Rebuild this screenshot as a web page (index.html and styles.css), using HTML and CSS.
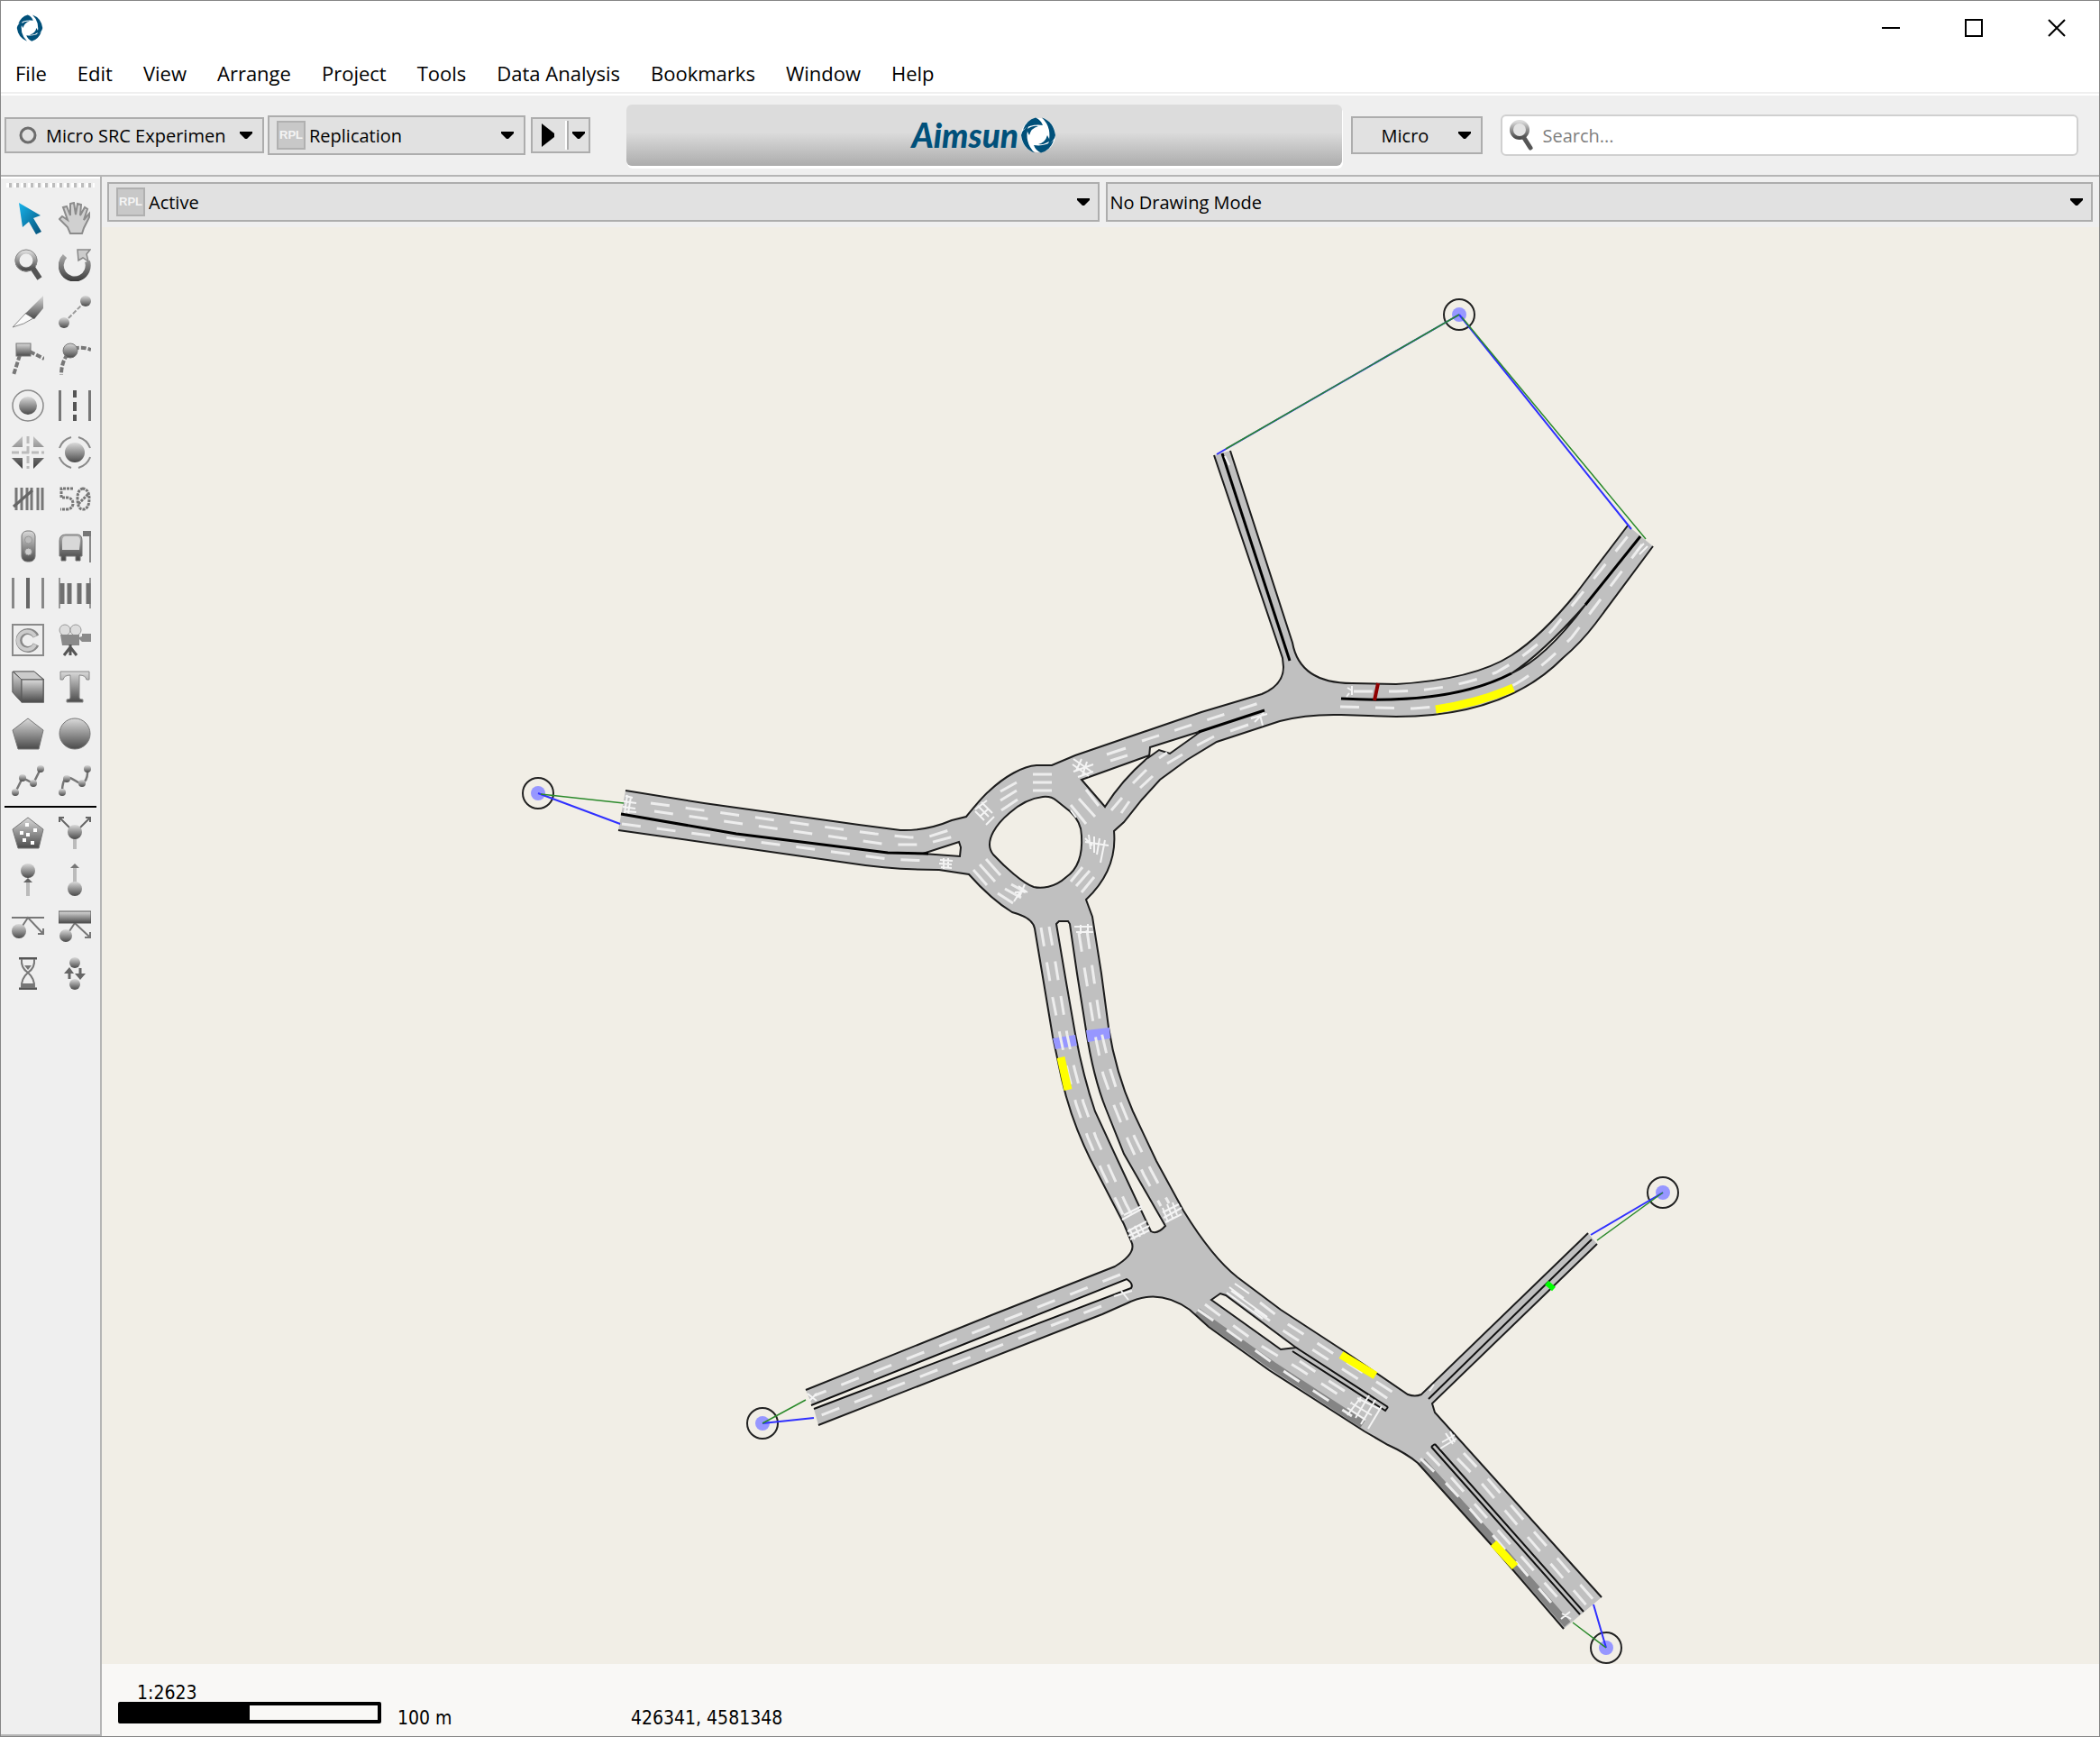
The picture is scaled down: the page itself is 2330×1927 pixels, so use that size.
FILE: index.html
```html
<!DOCTYPE html>
<html lang="en">
<head>
<meta charset="utf-8">
<title>Aimsun</title>
<link rel="stylesheet" href="styles.css">
</head>
<body>
<svg class="defs" aria-hidden="true">
  <defs>
    <linearGradient id="g" x1="0" y1="0" x2="0" y2="1"><stop offset="0" stop-color="#dadada"/><stop offset="1" stop-color="#4a4a4a"/></linearGradient>
    <linearGradient id="gu" gradientUnits="userSpaceOnUse" x1="0" y1="0" x2="0" y2="36"><stop offset="0" stop-color="#c4c4c4"/><stop offset="1" stop-color="#3c3c3c"/></linearGradient>
    <linearGradient id="blue" x1="0" y1="0" x2="1" y2="1"><stop offset="0" stop-color="#18b4ec"/><stop offset="1" stop-color="#045078"/></linearGradient>
    <symbol id="arrow" viewBox="0 0 14 8"><path d="M0 0H14V2L8 8H6L0 2Z"/></symbol>
    <symbol id="swirl" viewBox="-20 -20 40 40">
      <g id="blades" fill="#00507a">
        <path id="blade" d="M-17 -6Q-13 -17 -3 -19.500Q3 -17 5 -11Q-7 -13 -17 -6ZM4 -19.500Q17 -15 19 0Q18 6 11 10Q16 -8 4 -19.500ZM-13 -6Q-7 -11 0 -10Q-8 -8 -10 0Z"/>
        <use href="#blade" transform="rotate(180)"/>
      </g>
    </symbol>
  </defs>
</svg>
<div class="window">
  <header class="titlebar">
    <svg class="app-icon" aria-hidden="true"><use href="#swirl"/></svg>
    <div class="window-buttons">
      <button aria-label="Minimize"><svg viewBox="0 0 20 20"><path d="M0 10H20"/></svg></button>
      <button aria-label="Maximize"><svg viewBox="0 0 20 20"><path d="M1 1H19V19H1Z"/></svg></button>
      <button aria-label="Close"><svg viewBox="0 0 20 20"><path d="M1 1L19 19M19 1L1 19"/></svg></button>
    </div>
  </header>
  <nav class="menubar">
    <button>File</button><button>Edit</button><button>View</button><button>Arrange</button><button>Project</button><button>Tools</button><button>Data Analysis</button><button>Bookmarks</button><button>Window</button><button>Help</button>
  </nav>
  <div class="toolbar">
    <div class="combo experiment">
      <svg class="ring" viewBox="0 0 20 20" aria-hidden="true"><circle cx="10" cy="10" r="8"/></svg>
      <select aria-label="Experiment"><option>Micro SRC Experimen</option></select>
      <svg class="arrow" aria-hidden="true"><use href="#arrow"/></svg>
    </div>
    <div class="combo replication">
      <span class="rpl">RPL</span>
      <select aria-label="Replication"><option>Replication</option></select>
      <svg class="arrow" aria-hidden="true"><use href="#arrow"/></svg>
    </div>
    <div class="run">
      <button aria-label="Run"><svg class="play" viewBox="0 0 14 26"><path d="M0 0L14 11V15L0 26Z"/></svg></button>
      <button class="run-more" aria-label="Run options"><svg class="arrow"><use href="#arrow"/></svg></button>
    </div>
    <div class="brand"><span>Aimsun</span><svg viewBox="-20 -20 40 40" aria-hidden="true"><circle r="19" fill="#fff"/><use href="#blades"/></svg></div>
    <div class="combo mode">
      <select aria-label="Simulation level"><option>Micro</option></select>
      <svg class="arrow" aria-hidden="true"><use href="#arrow"/></svg>
    </div>
    <label class="search">
      <svg viewBox="0 0 28 34" aria-hidden="true"><circle cx="12" cy="11" r="9" fill="#e4e4e4" stroke="url(#g)" stroke-width="4"/><path d="M17 20L24 31" stroke="#555" stroke-width="5" stroke-linecap="round"/></svg>
      <input type="text" placeholder="Search..." aria-label="Search">
    </label>
  </div>
  <main class="workspace">
    <aside class="sidebar">
      <div class="grip"></div>
      <div class="tools">
        <button aria-label="Select"><svg viewBox="0 0 36 36"><path d="M8 1L32 15L24 18L33 33L27 36L19 22L12 28Z" fill="url(#blue)"/></svg></button>
        <button aria-label="Pan"><svg viewBox="0 0 36 36"><path d="M13 35L10 28L1 19L4 16L10 20L5 6L9 5L13 15L13 2L17 1L19 14L21 2L25 3L24 15L29 6L32 8L28 20L34 13L34 17L28 29L26 35Z" fill="#d0d0d0" stroke="#8c8c8c" stroke-width="2"/></svg></button>
        <button aria-label="Zoom"><svg viewBox="0 0 36 36"><circle cx="16" cy="13" r="10" fill="none" stroke="url(#g)" stroke-width="5"/><circle cx="16" cy="13" r="12" fill="none" stroke="#888"/><path d="M23 21L31 33" stroke="#555" stroke-width="6"/></svg></button>
        <button aria-label="Rotate"><svg viewBox="0 0 36 36"><path d="M7 8A15 15 0 1 0 32 14" fill="none" stroke="url(#gu)" stroke-width="6"/><path d="M21 1H35L31 6L33 14L27 10L22 13Z" fill="#ccc" stroke="#888" stroke-width="1.5"/></svg></button>
        <button aria-label="Cut"><svg viewBox="0 0 36 36"><path d="M1 35L16 19L24 25Q14 32 1 35Z" fill="#fafafa" stroke="#888"/><path d="M35 0V14L25 26L15 20Z" fill="url(#g)"/></svg></button>
        <button aria-label="Connection"><svg viewBox="0 0 36 36"><path d="M6 30L30 6" stroke="#999" stroke-width="2" stroke-dasharray="5 2"/><circle cx="30" cy="6" r="6" fill="url(#g)"/><circle cx="6" cy="30" r="6" fill="url(#g)"/></svg></button>
        <button aria-label="Vertex"><svg viewBox="0 0 36 36"><path d="M9 14L2 36M20 10L36 18" stroke="#777" stroke-width="4" stroke-dasharray="6 2"/><rect x="5" y="1" width="16" height="14" fill="url(#g)" stroke="#777"/></svg></button>
        <button aria-label="Curve vertex"><svg viewBox="0 0 36 36"><path d="M10 13Q3 22 3 36M17 7Q25 4 36 8" fill="none" stroke="#777" stroke-width="4" stroke-dasharray="6 2"/><circle cx="13" cy="9" r="8" fill="url(#g)" stroke="#777"/></svg></button>
        <button aria-label="Centroid"><svg viewBox="0 0 36 36"><circle cx="18" cy="18" r="17" fill="none" stroke="#8a8a8a" stroke-width="1.5"/><circle cx="18" cy="18" r="10" fill="url(#g)"/></svg></button>
        <button aria-label="Section"><svg viewBox="0 0 36 36"><path d="M1.500 1V35M34.500 1V35" stroke="#777" stroke-width="3"/><path d="M18 1V9M18 14V24M18 28V35" stroke="#555" stroke-width="4"/></svg></button>
        <button aria-label="Node"><svg viewBox="0 0 36 36"><path d="M12 0V12H0ZM24 0V12H36ZM12 36V24H0ZM24 36V24H36Z" fill="url(#gu)"/><path d="M18 0V36M0 18H36" stroke="#bbb" stroke-width="3" stroke-dasharray="8 3"/></svg></button>
        <button aria-label="Roundabout"><svg viewBox="0 0 36 36"><circle cx="18" cy="18" r="11" fill="url(#g)"/><path d="M1 13Q4 4 14 1M22 1Q32 4 35 13M35 23Q32 32 22 35M14 35Q4 32 1 23" fill="none" stroke="#8a8a8a" stroke-width="2"/></svg></button>
        <button aria-label="Detector count"><svg viewBox="0 0 36 36"><path d="M5 5V30M11 5V30M17 5V30M22 5V30M29 5V30M34 5V30" stroke="#777" stroke-width="3"/><path d="M2 26L23 8" stroke="#666" stroke-width="3"/></svg></button>
        <button aria-label="Speed sign"><svg viewBox="0 0 36 36"><path d="M16 6H3V16H10Q16 17 16 23Q15 29 9 29H2M27 6Q21 7 21 17Q21 29 27 29Q34 29 34 17Q34 7 27 6ZM22 23L33 12" fill="none" stroke="#777" stroke-width="3" stroke-dasharray="3 1"/></svg></button>
        <button aria-label="Traffic light"><svg viewBox="0 0 36 36"><rect x="11" y="1" width="15" height="34" rx="6" fill="url(#g)" stroke="#777"/><circle cx="18.500" cy="11" r="4" fill="#bbb" stroke="#999"/><circle cx="18.500" cy="24" r="4" fill="#ccc" stroke="#888"/></svg></button>
        <button aria-label="Bus stop"><svg viewBox="0 0 36 36"><path d="M1 12Q1 5 8 5H21Q26 5 26 12V29H24V34H19V29H8V34H3V29H1Z" fill="url(#gu)" stroke="#777"/><path d="M4 12Q4 7 8 7H20Q24 7 24 12L23 22H4Z" fill="#d8d8d8"/><path d="M27 3H35V36" fill="none" stroke="#888" stroke-width="2"/><rect x="27" y="1" width="9" height="6" fill="#777"/></svg></button>
        <button aria-label="Lanes"><svg viewBox="0 0 36 36"><path d="M1.500 1V35M34.500 1V35" stroke="#888" stroke-width="3"/><path d="M18 1V35" stroke="#666" stroke-width="4"/></svg></button>
        <button aria-label="Pedestrian crossing"><svg viewBox="0 0 36 36"><path d="M1 1V35M35 1V35" stroke="#999" stroke-width="2"/><path d="M4 7V30M12 7V30M23 7V30M33 7V30" stroke="#707070" stroke-width="5"/></svg></button>
        <button aria-label="Controller"><svg viewBox="0 0 36 36"><rect x="1" y="1" width="34" height="34" fill="#eee" stroke="#8a8a8a" stroke-width="2"/><path d="M27 14A10 10 0 1 0 27 23" fill="none" stroke="#888" stroke-width="7"/><path d="M26 14A10 10 0 1 0 26 23" fill="none" stroke="#ccc" stroke-width="4"/></svg></button>
        <button aria-label="Camera"><svg viewBox="0 0 36 36"><circle cx="7" cy="7" r="6" fill="#ddd" stroke="#999"/><circle cx="19" cy="7" r="6" fill="#ddd" stroke="#999"/><path d="M2 12H23V15L26 14V11H36V20H26L23 17V24H4Z" fill="#8a8a8a"/><path d="M13 23V35M13 26L6 35M13 26L20 35" stroke="#555" stroke-width="3"/></svg></button>
        <button aria-label="Box"><svg viewBox="0 0 36 36"><path d="M1 1H25L36 10V35H11L1 24Z" fill="#999" stroke="#666"/><path d="M1 1L11 10V35L1 24Z" fill="url(#g)" stroke="#666"/><path d="M2 1H25L35 10H11Z" fill="#ccc" stroke="#666"/><rect x="11" y="10" width="24" height="25" fill="url(#g)" stroke="#555"/></svg></button>
        <button aria-label="Text tool"><svg viewBox="0 0 36 36"><path d="M2 1H34V10H31Q30 5 23 5V30Q23 32 27 32V35H9V32Q13 32 13 30V5Q6 5 5 10H2Z" fill="url(#g)" stroke="#888"/></svg></button>
        <button aria-label="Polygon"><svg viewBox="0 0 36 36"><path d="M18 1L35 14L30 35H7L1 14Z" fill="url(#g)" stroke="#777"/></svg></button>
        <button aria-label="Circle"><svg viewBox="0 0 36 36"><circle cx="18" cy="18" r="17" fill="url(#g)" stroke="#777"/></svg></button>
        <button aria-label="Polyline"><svg viewBox="0 0 36 36"><path d="M4 31L12 15L24 21L32 5" fill="none" stroke="#777" stroke-width="2.500"/><g fill="url(#g)"><circle cx="4" cy="31" r="4"/><circle cx="12" cy="15" r="4"/><circle cx="24" cy="21" r="4"/><circle cx="32" cy="5" r="4"/></g></svg></button>
        <button aria-label="Bezier"><svg viewBox="0 0 36 36"><path d="M4 31C4 8 14 15 20 19S33 20 32 5" fill="none" stroke="#777" stroke-width="2.500"/><g fill="url(#g)"><circle cx="4" cy="31" r="4"/><circle cx="9" cy="16" r="4"/><circle cx="26" cy="21" r="4"/><circle cx="32" cy="5" r="4"/></g></svg></button>
      </div>
      <hr>
      <div class="tools">
        <button aria-label="Pedestrian area"><svg viewBox="0 0 36 36"><path d="M18 1L35 14L30 35H7L1 14Z" fill="url(#g)" stroke="#777"/><path d="M15 7h4v4h-4zM9 16h4v4h-4zM16 18h4v4h-4zM24 13h4v4h-4zM12 24h4v4h-4zM21 27h4v4h-4z" fill="#fff"/></svg></button>
        <button aria-label="Decision"><svg viewBox="0 0 36 36"><path d="M18 20V36" stroke="#bbb" stroke-width="4"/><path d="M15 15L1 1M21 15L35 1M1 6V1H6M30 1H35V6" fill="none" stroke="#666" stroke-width="2"/><circle cx="18" cy="17" r="8" fill="url(#g)"/></svg></button>
        <button aria-label="Exit"><svg viewBox="0 0 36 36"><path d="M18 18V36" stroke="#bbb" stroke-width="4"/><path d="M13 21L18 16L23 21Z" fill="#666"/><circle cx="18" cy="8" r="8" fill="url(#g)"/></svg></button>
        <button aria-label="Entrance"><svg viewBox="0 0 36 36"><path d="M18 3V24" stroke="#bbb" stroke-width="4"/><path d="M13 5L18 0L23 5Z" fill="#777"/><circle cx="18" cy="28" r="8" fill="url(#g)"/></svg></button>
        <button aria-label="Waypoint"><svg viewBox="0 0 36 36"><path d="M0 8H36M10 20L18 8L35 26M35 20V26H29" fill="none" stroke="#777" stroke-width="2"/><circle cx="8" cy="23" r="8" fill="url(#g)"/></svg></button>
        <button aria-label="Service point"><svg viewBox="0 0 36 36"><path d="M10 26L18 14L35 30M35 24V30H29" fill="none" stroke="#777" stroke-width="2"/><rect y="1" width="36" height="13" fill="url(#g)" stroke="#555"/><circle cx="8" cy="28" r="7" fill="url(#g)"/></svg></button>
        <button aria-label="Delay"><svg viewBox="0 0 36 36"><path d="M8 1H28M8 35H28" stroke="#555" stroke-width="3"/><path d="M11 2Q10 12 18 17Q26 12 25 2M11 34Q10 24 18 17Q26 24 25 34" fill="none" stroke="#777" stroke-width="2"/><path d="M12 34V29H24V34ZM14 9H22L18 14Z" fill="#777"/></svg></button>
        <button aria-label="Transfer"><svg viewBox="0 0 36 36"><circle cx="18" cy="6" r="6" fill="url(#g)"/><circle cx="18" cy="30" r="6" fill="url(#g)"/><path d="M12 24V14M24 12V22" stroke="#666" stroke-width="3"/><path d="M6 18L12 11L17 18ZM18 18H30L24 25Z" fill="#666"/></svg></button>
      </div>
    </aside>
    <section class="view">
      <div class="view-bar">
        <div class="combo">
          <span class="rpl">RPL</span>
          <select aria-label="Active replication"><option>Active</option></select>
          <svg class="arrow" aria-hidden="true"><use href="#arrow"/></svg>
        </div>
        <div class="combo plain">
          <select aria-label="Drawing mode"><option>No Drawing Mode</option></select>
          <svg class="arrow" aria-hidden="true"><use href="#arrow"/></svg>
        </div>
      </div>
      <div class="map">
        <svg viewBox="113 252 2216 1594" role="img" aria-label="Road network">
          <!-- Asphalt -->
          <path fill="#c0c0c0" d="M694 877L781 891L953 915L999 921Q1028 922 1056 910L1072 906C1085 890 1090 884 1097 878C1115 861 1135 850 1150 849H1167L1193 838L1333 790L1400 770Q1424 760 1424 740L1423 730L1347 505L1365 500L1434 713Q1442 758 1500 758L1549 759Q1635 754 1677 727Q1710 706 1749 658L1806 583L1834 606L1770 692Q1754 713 1734 730Q1670 795 1549 795L1488 793Q1450 792 1420 800L1350 823L1317 843L1287 865L1267 887L1247 912L1236 922Q1240 965 1205 998L1212 1017L1222 1080L1230 1140Q1238 1190 1257 1233L1283 1288L1313 1343Q1345 1395 1373 1417L1421 1453L1493 1500L1562 1547Q1570 1550 1577 1547L1762 1368L1772 1380L1589 1557L1592 1567L1777 1772L1735 1807L1653 1712L1573 1623L1540 1603L1514 1588L1408 1520L1341 1472L1320 1453Q1285 1428 1250 1446L1223 1458L908 1581L903 1563L894 1542L1100 1459L1237 1405Q1262 1390 1255 1377L1247 1358L1217 1300Q1190 1250 1178 1197L1168 1150L1158 1090L1148 1030Q1146 1018 1123 1012Q1100 998 1075 970L1042 965Q990 965 946 958L686 921Z"/>
          <!-- Paved shoulders -->
          <g fill="none" stroke="#858585" stroke-width="9">
            <path d="M1328 1455L1345 1468L1412 1515L1512 1580"/><path d="M1577 1621L1657 1709L1739 1802"/>
          </g>
          <!-- Outer kerbs -->
          <g fill="none" stroke="#1c1c1c" stroke-width="2">
            <path d="M694 877L781 891L953 915L999 921Q1028 922 1056 910L1072 906C1085 890 1090 884 1097 878C1115 861 1135 850 1150 849H1167L1193 838L1333 790L1400 770Q1424 760 1424 740L1423 730L1347 505"/>
            <path d="M1365 500L1434 713Q1442 758 1500 758L1549 759Q1635 754 1677 727Q1710 706 1749 658L1806 583"/>
            <path d="M1834 606L1770 692Q1754 713 1734 730Q1670 795 1549 795L1488 793Q1450 792 1420 800L1350 823L1317 843L1287 865L1267 887L1247 912L1236 922Q1240 965 1205 998L1212 1017L1222 1080L1230 1140Q1238 1190 1257 1233L1283 1288L1313 1343Q1345 1395 1373 1417L1421 1453L1493 1500L1562 1547Q1570 1550 1577 1547L1762 1368"/>
            <path d="M1772 1380L1589 1557L1592 1567L1777 1772"/>
            <path d="M1735 1807L1653 1712L1573 1623Q1560 1612 1540 1603L1514 1588L1408 1520L1341 1472L1320 1453Q1285 1428 1250 1446L1223 1458L908 1581"/>
            <path d="M894 1542L1100 1459L1237 1405Q1262 1390 1255 1377L1247 1358L1217 1300Q1190 1250 1178 1197L1168 1150L1158 1090L1148 1030Q1146 1018 1123 1012Q1100 998 1075 970L1042 965Q990 965 946 958L686 921"/>
          </g>
          <!-- Islands and medians -->
          <g fill="#f1eee6" stroke="#1c1c1c" stroke-width="2">
            <path d="M1157 884Q1166 883 1172 888L1187 900Q1200 912 1200 927Q1202 960 1183 973C1170 985 1155 986 1147 984C1135 980 1115 962 1102 948Q1094 938 1102 923Q1108 912 1120 902Q1138 886 1157 884Z"/>
            <path d="M1200 865L1226 895Q1245 865 1273 841L1275 838Z"/>
            <path d="M1276 829L1333 811L1298 836L1286 832L1275 840Z"/>
            <path d="M1024 947L1064 934L1066 940L1065 950Z"/>
            <path d="M1172 1025L1175 1022H1185L1187 1025L1195 1080L1205 1143Q1213 1195 1227 1230L1247 1280L1293 1360Q1284 1370 1277 1366L1240 1287L1215 1233Q1202 1195 1193 1147L1183 1090Z"/>
            <path d="M1344 1442L1354 1435L1360 1437L1438 1495L1421 1497Z"/>
            <path d="M1677 747Q1710 726 1759 671Q1714 731 1677 747Z"/>
          </g>
          <path d="M898 1559L1250 1419Q1258 1424 1255 1429L901 1564Z" fill="#f1eee6"/>
          <g fill="none" stroke="#111" stroke-width="2">
            <path d="M900 1559L1250 1419Q1258 1424 1255 1429L903 1563"/>
            <path d="M1438 1495L1540 1561M1434 1499L1537 1565L1540 1561"/>
            <path d="M1592 1602L1757 1788M1588 1605L1753 1791M1588 1605L1592 1602"/>
            <path d="M1585 1552L1766 1375"/>
          </g>
          <g fill="none" stroke="#000" stroke-width="3">
            <path d="M1356 503L1431 733"/>
            <path d="M689 903L817 925L985 946L1030 947"/>
            <path d="M1488 775Q1610 782 1677 747"/>
            <path d="M1759 671L1820 595"/>
            <path d="M1330 812L1403 788"/>
          </g>
          <!-- Detectors and stops -->
          <path d="M1168 1152L1193 1148L1195 1160L1171 1164ZM1205 1143L1231 1140L1232 1152L1207 1156Z" fill="#9797ff"/>
          <!-- Lane markings -->
          <g fill="none" stroke="#ededed" stroke-width="3" stroke-dasharray="21 18">
            <path d="M722 891L971 925L1010 929H1028L1062 918"/>
            <path d="M726 900L985 937H1024L1062 927"/>
            <path d="M690 914L985 953L1030 955"/>
            <path d="M1155 1029L1168 1107L1177 1153L1185 1190L1194 1225L1207 1262L1223 1300L1240 1335L1250 1356"/>
            <path d="M1164 1028L1171 1068L1184 1148L1192 1185L1202 1223L1216 1262L1232 1298L1249 1335L1258 1352"/>
            <path d="M1197 1035L1203 1073L1216 1153L1224 1192L1237 1229L1252 1266L1269 1303L1288 1338"/>
            <path d="M1206 1032L1217 1109L1223 1149L1232 1187L1244 1225L1259 1262L1277 1298L1297 1335"/>
            <path d="M1243 1414L904 1548"/><path d="M1222 1449L906 1572"/>
            <path d="M1398 1445L1429 1469L1463 1491L1549 1547"/><path d="M1392 1453L1425 1477L1527 1543L1546 1556"/>
            <path d="M1337 1447L1369 1471L1401 1494L1442 1519L1500 1557"/><path d="M1329 1453L1362 1476L1394 1499L1427 1523L1500 1571"/>
            <path d="M1442 1510L1476 1533L1510 1555"/>
            <path d="M1624 1612L1652 1642L1770 1777"/><path d="M1617 1618L1645 1647L1762 1783"/>
            <path d="M1583 1611L1610 1639L1728 1772"/><path d="M1576 1618L1603 1644L1631 1674L1722 1779"/>
            <path d="M1502 767H1549Q1610 766 1660 746Q1700 724 1724 697L1774 635L1810 590"/>
            <path d="M1487 784L1568 786Q1640 782 1683 758Q1710 742 1744 707L1822 604"/>
            <path d="M1267 822L1400 779" stroke-dasharray="20 18"/>
          </g>
          <g fill="none" stroke="#ededed" stroke-width="3">
            <path d="M1228 837l21 -7M1232 844l19 -6M1233 899l12 -14M1244 902l9 -13M1257 869l15 -15M1265 874l14 -13M1286 841l9 -6M1295 847l17 -10M1328 827l19 -10M1365 811l20 -7"/>
            <path d="M1146 859h21M1146 868h21M1146 877h21M1110 878l18 -10M1110 888l18 -11M1111 899l18 -12"/>
            <path d="M1087 959l17 19M1094 953l16 18M1080 965l15 17M1107 991l17 11M1115 986l18 10M1122 981l16 9"/>
            <path d="M1188 978l13 -16M1194 983l15 -17M1200 990l14 -17M1188 893l17 21M1197 886l18 20M1205 876l14 18"/>
          </g>
          <!-- Turn arrows and stop lines -->
          <g fill="none" stroke="#f4f4f4" stroke-width="2">
            <path d="M694 883l8 2M692 889l14 2M691 895l14 2M694 900l12 1M696 882l-3 20M700 884l-3 18"/>
            <path d="M1043 954l14 1M1042 958l14 1M1044 962l12 1M1047 952v12M1052 952v12"/>
            <path d="M1191 842l20 14M1190 848l18 13M1200 842l-6 13M1206 845l-5 15M1191 856l22 -8M1196 862l17 -6"/>
            <path d="M1082 900l10 10M1085 894l12 12M1089 890l12 12M1082 898l13 -10M1088 905l9 -8M1094 915l9 -9"/>
            <path d="M1188 899l6 8M1204 930l8 8M1208 926l2 16M1214 928v18M1220 930l-3 18M1226 932l-5 25M1204 934l26 4"/>
            <path d="M1130 983l10 7M1126 990l12 -1M1125 1000l8 -12M1137 981l-6 14"/>
            <path d="M1192 1028h20M1194 1034h19M1199 1026v10M1207 1025v10"/>
            <path d="M1388 797l18 -5M1392 801l10 -10M1398 793l3 12M1495 763l5 3M1497 769l-3 4M1500 761v10"/>
            <path d="M1245 1353l22 -12M1251 1366l21 -11M1252 1371l23 -11M1254 1375l21 -10M1247 1348l20 -10M1253 1363l6 12M1259 1360l6 12M1264 1358l6 11"/>
            <path d="M1290 1345l18 -9M1291 1351l20 -11M1293 1356l18 -9M1295 1336l6 15M1301 1334l5 14M1290 1340l6 16"/>
            <path d="M1236 1438l20 -6M1244 1432l8 10M1364 1428l16 12M1370 1424l16 11M1361 1434l40 29M1366 1432l40 29"/>
            <path d="M1495 1562l20 13M1500 1557l22 13M1506 1551l24 12M1510 1580l16 -27M1518 1585l15 -25M1504 1573l15 -25M1495 1570l15 -20"/>
            <path d="M1600 1600l14 -8M1598 1607l18 -11M1604 1590l8 12M1609 1588l5 12"/>
            <path d="M896 1546l10 8M898 1554l8 -8M1824 603l-8 8M1828 606l-9 9M1359 506l5 10M1586 1543l5 -7M1732 1796l10 -8M1733 1790l10 6"/>
          </g>
          <!-- Public transport stops, meters and signals -->
          <g fill="none" stroke="#ff0" stroke-width="9">
            <path d="M1593 787Q1640 780 1679 763"/><path d="M1177 1173L1185 1209"/><path d="M1488 1503L1526 1526"/><path d="M1657 1712L1681 1738"/>
          </g>
          <path d="M1529 758L1525 777" stroke="#8f0000" stroke-width="4"/>
          <path d="M1716 1423L1724 1430" stroke="#0f0" stroke-width="6"/>
          <!-- Centroids and their connections -->
          <g fill="none" stroke="#222" stroke-width="2">
            <circle cx="1619" cy="349" r="17"/><circle cx="597" cy="880" r="17"/><circle cx="1845" cy="1323" r="17"/><circle cx="846" cy="1579" r="17"/><circle cx="1782" cy="1828" r="17"/>
          </g>
          <g fill="#9797ff">
            <circle cx="1619" cy="349" r="8"/><circle cx="597" cy="880" r="8"/><circle cx="1845" cy="1323" r="8"/><circle cx="846" cy="1579" r="8"/><circle cx="1782" cy="1828" r="8"/>
          </g>
          <path d="M1619 349L1350 504M1619 349L1810 587M597 880L688 914M1845 1323L1765 1370M846 1579L903 1573M1782 1828L1768 1780" stroke="#3030ff" stroke-width="2"/>
          <path d="M1619 349L1360 498M1622 352L1826 598M600 881L692 891M1845 1323L1772 1376M846 1579L894 1553M1782 1828L1745 1800" stroke="#2b8a2b" stroke-width="1.500"/>
        </svg>
      </div>
      <footer class="status">
        <div class="scale"><span>1:2623</span><div class="scale-bar"></div></div>
        <span class="distance">100 m</span>
        <span class="coords">426341, 4581348</span>
      </footer>
    </section>
  </main>
</div>
</body>
</html>
```
FILE: styles.css
```css
* { box-sizing: border-box; }
body { margin: 0; font-family: "Open Sans", "Noto Sans", sans-serif; font-size: 20px; color: #000; }
button, select, input { font: inherit; color: inherit; border: 0; padding: 0; margin: 0; background: none; }
svg { display: block; flex: none; }
.defs { position: absolute; width: 0; height: 0; }
.window { min-height: 100vh; display: flex; flex-direction: column; border: 1px solid #858585; background: #efefef; }

.titlebar { display: flex; justify-content: space-between; align-items: center; height: 59px; padding: 0 1px 0 17px; background: #fff; }
.app-icon { width: 30px; height: 30px; }
.window-buttons { display: flex; }
.window-buttons button { width: 92px; height: 59px; display: grid; place-items: center; }
.window-buttons svg { width: 20px; height: 20px; fill: none; stroke: #000; stroke-width: 2; }
.menubar { display: flex; gap: 34px; height: 46px; padding: 0 16px 2px; background: #fff; font-size: 22px; border-bottom: 2px solid #fff; box-shadow: inset 0 -2px #efefef; }
.toolbar { display: flex; align-items: center; height: 88px; padding: 0 23px 0 4px; }

.combo { position: relative; display: flex; align-items: center; gap: 4px; height: 44px; padding: 0 11px 0 8px; border: 2px solid #adadad; background: #e1e1e1; }
.combo select { appearance: none; flex: 1; min-width: 0; height: 100%; outline: 0; }
.arrow { width: 14px; height: 8px; }
.rpl { width: 32px; height: 32px; border: 2px solid #b0b0b0; background: #c8c8c8; color: #f4f4f4; font: 700 13px/28px "Liberation Sans", sans-serif; text-align: center; flex: none; }
.experiment { width: 288px; height: 40px; padding-left: 14px; gap: 10px; }
.ring { width: 20px; height: 20px; fill: none; stroke: #6c6c6c; stroke-width: 3; }
.replication { width: 286px; margin-left: 4px; }
.run { display: flex; align-items: center; width: 66px; height: 40px; margin-left: 6px; border: 2px solid #adadad; background: #e1e1e1; }
.run button { flex: 1; height: 32px; display: grid; place-items: center; }
.run .run-more { flex: 0 0 24px; border-left: 2px solid #adadad; box-shadow: -2px 0 #fff; }
.play { width: 14px; height: 26px; margin-right: 4px; }
.brand { flex: 14; min-width: 0; display: flex; align-items: center; justify-content: center; gap: 2px; height: 68px; margin: 0 10px 0 40px; border-radius: 6px; background: linear-gradient(#dcdcdc 45%, #acacac); box-shadow: 1px 3px #fff; }
.brand span { font: italic 900 37px/40px Lato, sans-serif; color: #00507a; }
.brand svg { width: 40px; height: 40px; }
.mode { width: 146px; height: 42px; padding-left: 32px; }
.search { flex: 11; min-width: 0; display: flex; align-items: center; gap: 10px; height: 46px; margin-left: 20px; padding: 0 7px; border: 2px solid #d0d0d0; border-radius: 6px; background: #fff; }
.search svg { width: 28px; height: 34px; }
.search input { flex: 1; min-width: 0; outline: 0; }
.search input::placeholder { color: #808080; opacity: 1; }

.workspace { flex: 1; display: flex; border-top: 2px solid #b5b5b5; }
.sidebar { flex: none; width: 112px; padding: 7px 4px 0; border-right: 2px solid #b5b5b5; border-bottom: 2px solid #b5b5b5; box-shadow: inset 0 2px #fff; }
.grip { height: 5px; margin: 0 2px 8px; background: repeating-linear-gradient(90deg, #fff 0 3px, #bcbcbc 3px 6px, #efefef 6px 8px); }
.tools { display: grid; grid-template-columns: 52px 52px; grid-auto-rows: 52px; }
.tools button { display: grid; place-items: center; }
.tools svg { width: 36px; height: 36px; }
.sidebar hr { height: 2px; margin: 2px 0; border: 0; background: #000; }

.view { flex: 1; min-width: 0; display: flex; flex-direction: column; background: #f1eee6; }
.view-bar { display: flex; gap: 7px; padding: 6px 7px 6px 6px; background: #efefef; }
.view-bar .combo { flex: 1; padding-right: 9px; }
.view-bar .plain { padding-left: 3px; }
.map { flex: 1; min-height: 0; display: flex; }
.map svg { flex: 1; width: 100%; min-width: 0; overflow: visible; }
.status { display: flex; align-items: flex-end; height: 80px; padding: 0 18px 7px; background: #f9f8f6; font: 21px/26px "DejaVu Sans Condensed", "Noto Sans", sans-serif; }
.scale { width: 292px; padding-bottom: 7px; }
.scale span { display: block; padding-left: 21px; line-height: 20px; }
.scale-bar { height: 24px; border: 4px solid #000; border-radius: 2px; background: linear-gradient(90deg, #000 50%, #f9f8f6 50%); }
.distance { width: 277px; padding-left: 18px; }
```
